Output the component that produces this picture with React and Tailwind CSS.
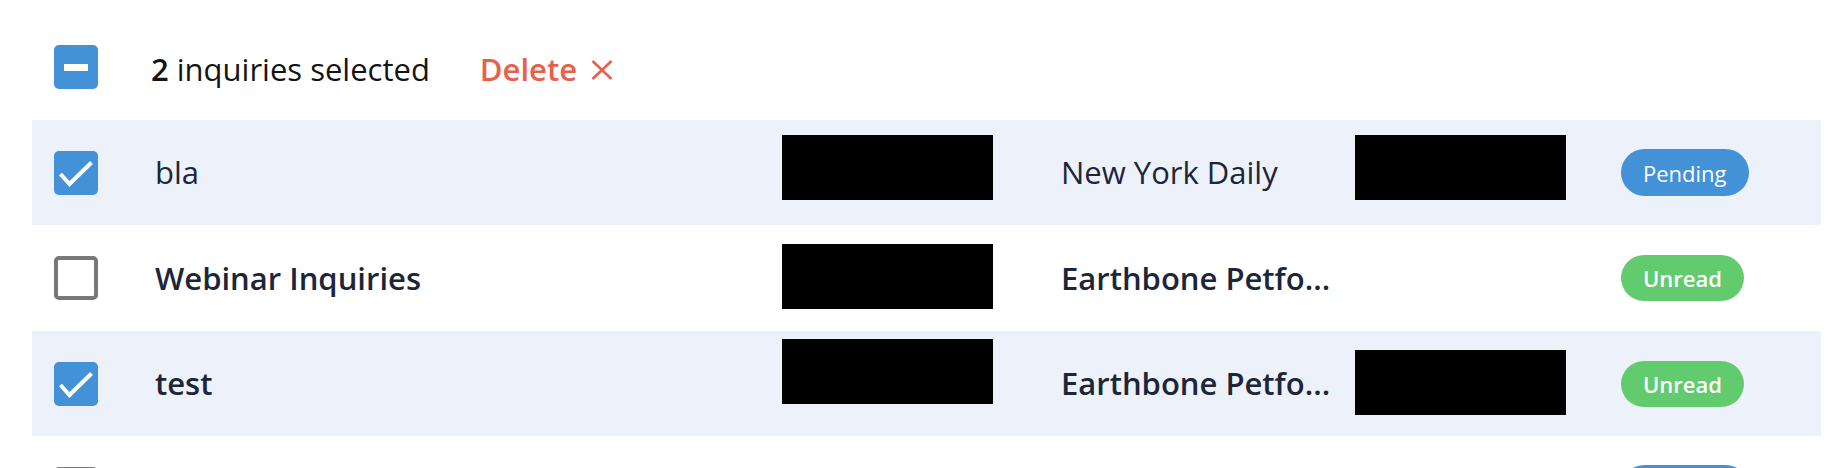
import React from "react";

const font = { fontFamily: '"Open Sans", "Noto Sans", sans-serif' };

function CheckedBox() {
  return (
    <div className="w-[44px] h-[44px] rounded-[5px] bg-[#4391d7] shrink-0">
      <svg width="44" height="44" viewBox="0 0 44 44">
        <polyline points="6.5,23 15.5,33 37.5,11.5" fill="none" stroke="#ffffff" strokeWidth="4" strokeLinejoin="miter" />
      </svg>
    </div>
  );
}

function IndeterminateBox() {
  return (
    <div className="w-[44px] h-[44px] rounded-[5px] bg-[#4391d7] shrink-0 flex items-center justify-center">
      <div className="w-[24px] h-[7px] bg-white" />
    </div>
  );
}

function EmptyBox() {
  return <div className="w-[44px] h-[44px] rounded-[5px] border-[4px] border-[#787878] bg-white shrink-0" />;
}

function Badge({ kind }) {
  if (kind === "Pending") {
    return (
      <div className="h-[47px] px-[22px] rounded-full bg-[#4391d7] text-white text-[22px] flex items-center leading-none">
        Pending
      </div>
    );
  }
  return (
    <div className="h-[46px] px-[22px] rounded-full bg-[#62cb6e] text-white text-[22px] font-semibold flex items-center leading-none">
      Unread
    </div>
  );
}

const rows = [
  { checked: true, name: "bla", company: "New York Daily", bold: false, box1: 15, box2: 15, status: "Pending", band: true, h: "h-[105px]" },
  { checked: false, name: "Webinar Inquiries", company: "Earthbone Petfo...", bold: true, box1: 19, box2: null, status: "Unread", band: false, h: "h-[106px]" },
  { checked: true, name: "test", company: "Earthbone Petfo...", bold: true, box1: 8, box2: 19, status: "Unread", band: true, h: "h-[105px]" },
  { checked: false, name: "", company: "", bold: false, box1: null, box2: null, status: "Pending", band: false, h: "h-[105px]" },
];

function Row({ r }) {
  return (
    <div className={`${r.h} flex items-center pl-[22px] ${r.band ? "bg-[#edf1f9]" : "bg-white"}`}>
      {r.checked ? <CheckedBox /> : <EmptyBox />}
      <div className={`ml-[57px] w-[627px] text-[31px] text-[#1c2638] whitespace-nowrap ${r.bold ? "font-semibold" : "font-normal"}`}>
        {r.name}
      </div>
      <div className="w-[211px] self-stretch shrink-0">
        {r.box1 !== null && (
          <div
            className={`w-[211px] h-[65px] bg-black ${r.box1 === 15 ? "mt-[15px]" : r.box1 === 19 ? "mt-[19px]" : "mt-[8px]"}`}
          />
        )}
      </div>
      <div className={`ml-[68px] w-[294px] text-[31px] text-[#1c2638] whitespace-nowrap ${r.bold ? "font-semibold" : "font-normal"}`}>
        {r.company}
      </div>
      <div className="w-[211px] self-stretch shrink-0">
        {r.box2 !== null && (
          <div className={`w-[211px] h-[65px] bg-black ${r.box2 === 15 ? "mt-[15px]" : "mt-[19px]"}`} />
        )}
      </div>
      <div className="ml-[55px]">
        <Badge kind={r.status} />
      </div>
    </div>
  );
}

export default function App() {
  return (
    <div className="w-[1842px] h-[468px] overflow-hidden bg-white" style={font}>
      <div className="pl-[32px] pr-[21px]">
        <div className="h-[120px] pt-[14px] pl-[22px] flex items-center">
          <IndeterminateBox />
          <div className="ml-[53px] mt-[4px] text-[31px] text-[#141414] whitespace-nowrap">
            <span className="font-semibold">2</span> inquiries selected
          </div>
          <div className="ml-[50px] mt-[4px] flex items-center text-[31px] font-semibold text-[#e8604b]">
            <span>Delete</span>
            <svg className="ml-[14px] mt-[1px]" width="22" height="20" viewBox="0 0 22 20">
              <line x1="1.5" y1="1" x2="20.5" y2="19" stroke="#e8604b" strokeWidth="2.6" />
              <line x1="20.5" y1="1" x2="1.5" y2="19" stroke="#e8604b" strokeWidth="2.6" />
            </svg>
          </div>
        </div>
        {rows.map((r, i) => (
          <Row key={i} r={r} />
        ))}
      </div>
    </div>
  );
}
